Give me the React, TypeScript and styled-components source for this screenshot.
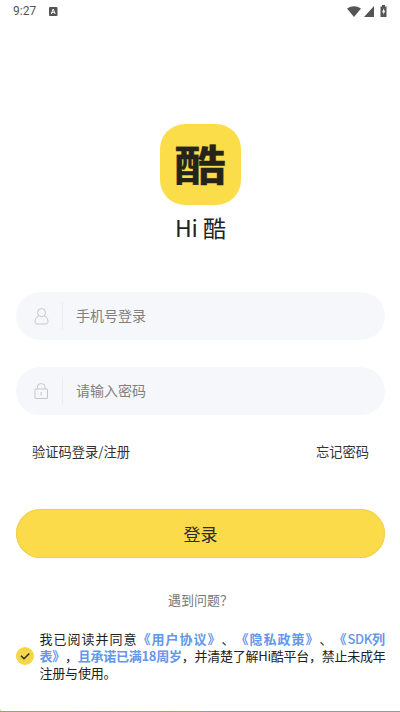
import React from "react";
import styled, { createGlobalStyle } from "styled-components";

const Global = createGlobalStyle`
  * { box-sizing: border-box; }
  body { margin: 0; background: #fff; }
  button { border: 0; padding: 0; background: none; font: inherit; color: inherit; }
`;

const Screen = styled.main`
  display: flex;
  flex-direction: column;
  width: 400px;
  height: 712px;
  overflow: hidden;
  padding: 0 15px 0 16px;
  background:
    linear-gradient(90deg, #aaa050, #a5a17c 200px, #99999b 205px) 0 100% / 100% 1px no-repeat,
    radial-gradient(circle at 100% 0, transparent 5px, #d3c158 6px) 0 100% / 5px 5px no-repeat,
    #fff;
  color: #2a2a2a;
  font-family: "Noto Sans CJK SC", sans-serif;
  text-spacing-trim: space-all;
`;

const StatusBar = styled.header`
  display: flex;
  align-items: center;
  height: 22px;
  margin: 0 -3px;
  color: #555;
  font: 12px/22px Roboto, sans-serif;
  svg { display: block; }
`;
const Time = styled.span`width: 36px;`;
const StatusIcons = styled.div`
  display: flex;
  align-items: center;
  gap: 2.5px;
  margin-left: auto;
`;

const Brand = styled.section`
  display: flex;
  flex-direction: column;
  align-items: center;
  height: 270px;
  padding-top: 102px;
`;
const Logo = styled.div`
  display: flex;
  align-items: center;
  justify-content: center;
  width: 81px;
  height: 81px;
  border-radius: 25px;
  background: #fadd48;
`;
const LogoMark = styled.span`
  color: #24231c;
  font-size: 48px;
  font-weight: 700;
  line-height: 48px;
  -webkit-text-stroke: 0.4px #24231c;
  transform: translate(0, -2.5px) scale(1.08, 0.88);
`;
const Title = styled.h1`
  margin: 5px 0 0;
  color: #222;
  font-size: 23px;
  font-weight: 400;
  line-height: 34px;
`;

const Field = styled.label`
  display: flex;
  align-items: center;
  height: 48px;
  flex: none;
  margin-bottom: 27px;
  border-radius: 24px;
  background: #f6f7fb;
  padding-left: 18px;
`;
const FieldIcon = styled.span`
  display: flex;
  width: 29px;
  height: 28px;
  align-items: center;
  border-right: 1px solid #ebecef;
`;
const Placeholder = styled.span`
  margin-left: 13px;
  padding-bottom: 2px;
  color: #808080;
  font-size: 14px;
  line-height: 20px;
`;

const Links = styled.nav`
  display: flex;
  justify-content: space-between;
  padding: 0 16px;
  color: #333;
  font-size: 13.25px;
  line-height: 20px;
`;
const Login = styled.button`
  flex: none;
  height: 49px;
  margin-top: 47px;
  border-radius: 25px;
  background: #fcdb4b;
  box-shadow: inset 0 0 0 1px #eed153;
  font-size: 17px;
  line-height: 49px;
`;
const Help = styled.button`
  align-self: center;
  margin-top: 32px;
  color: #777;
  font-size: 13px;
  line-height: 20px;
`;

const Consent = styled.div`
  display: flex;
  align-items: center;
  margin-top: 20px;
`;
const Check = styled.span`
  display: flex;
  flex: none;
  width: 23.5px;
`;
const Terms = styled.div`
  color: #222;
  font-size: 13px;
  line-height: 17px;
  white-space: nowrap;
`;
const TermsLine = styled.div<{ $spacing: number }>`
  letter-spacing: ${(p) => p.$spacing}px;
`;
const TermLink = styled.span`
  color: #6496ea;
  font-weight: 700;
`;
const Latin = styled.span`
  letter-spacing: -0.4px;
  font-weight: 500;
`;

export default function App() {
  return (
    <>
      <Global />
      <Screen>
        <StatusBar>
          <Time>9:27</Time>
          <svg width="9" height="9" viewBox="0 0 9 9">
            <rect width="8.5" height="9" rx="1" fill="#555" />
            <path d="M2.2 7 4.2 2l2 5M3 5.4h2.4" fill="none" stroke="#fff" />
          </svg>
          <StatusIcons>
            <svg width="14" height="11" viewBox="0 0 14 11">
              <path d="M0 2.6Q7-2.3 14 2.6L7 11Z" fill="#555" />
            </svg>
            <svg width="10" height="11" viewBox="0 0 10 11">
              <path d="M10 0V11H0Z" fill="#555" />
            </svg>
            <svg width="12" height="12" viewBox="0 0 12 12">
              <path d="M4.5 1.4H6V0h3v1.4h1.5V12h-6Z" fill="#555" />
              <path d="M8.1 3 6 7.2h1.3v2.5l2-4H8.1Z" fill="#fff" />
            </svg>
          </StatusIcons>
        </StatusBar>

        <Brand>
          <Logo><LogoMark>酷</LogoMark></Logo>
          <Title>Hi 酷</Title>
        </Brand>

        <Field>
          <FieldIcon>
            <svg width="15" height="17" viewBox="0 0 15 17" fill="none" stroke="#c5c5c8">
              <circle cx="7.5" cy="4.6" r="4" />
              <path d="M4.7 8.1C2.1 9 1 11.1 1 13.6c0 1.6.7 2.4 2.2 2.4h8.6c1.5 0 2.2-.8 2.2-2.4 0-2.5-1.1-4.6-3.7-5.5" />
            </svg>
          </FieldIcon>
          <Placeholder>手机号登录</Placeholder>
        </Field>
        <Field>
          <FieldIcon>
            <svg width="15" height="17" viewBox="0 0 15 17" fill="none" stroke="#c5c5c8">
              <rect x="1" y="6" width="12.5" height="9.5" rx=".5" />
              <path d="M3.3 6V4.4a3.9 3.9 0 0 1 7.8 0V6M7.2 9v3.5" />
            </svg>
          </FieldIcon>
          <Placeholder>请输入密码</Placeholder>
        </Field>

        <Links>
          <button>验证码登录/注册</button>
          <button>忘记密码</button>
        </Links>
        <Login>登录</Login>
        <Help>遇到问题？</Help>

        <Consent>
          <Check>
            <svg width="18" height="18" viewBox="0 0 18 18">
              <circle cx="9" cy="9" r="9" fill="#f5d64a" />
              <path d="m5 8.7 3 3 5.3-5.2" fill="none" stroke="#302c1d" strokeWidth="1.5" />
            </svg>
          </Check>
          <Terms>
            <TermsLine $spacing={1}>我已阅读并同意<TermLink>《用户协议》</TermLink>、<TermLink>《隐私政策》</TermLink>、<TermLink>《<Latin>SDK</Latin>列</TermLink></TermsLine>
            <TermsLine $spacing={-0.26}><TermLink>表》</TermLink>，<TermLink>且承诺已满18周岁</TermLink>，并清楚了解Hi酷平台，禁止未成年</TermsLine>
            <TermsLine $spacing={-0.2}>注册与使用。</TermsLine>
          </Terms>
        </Consent>
      </Screen>
    </>
  );
}
